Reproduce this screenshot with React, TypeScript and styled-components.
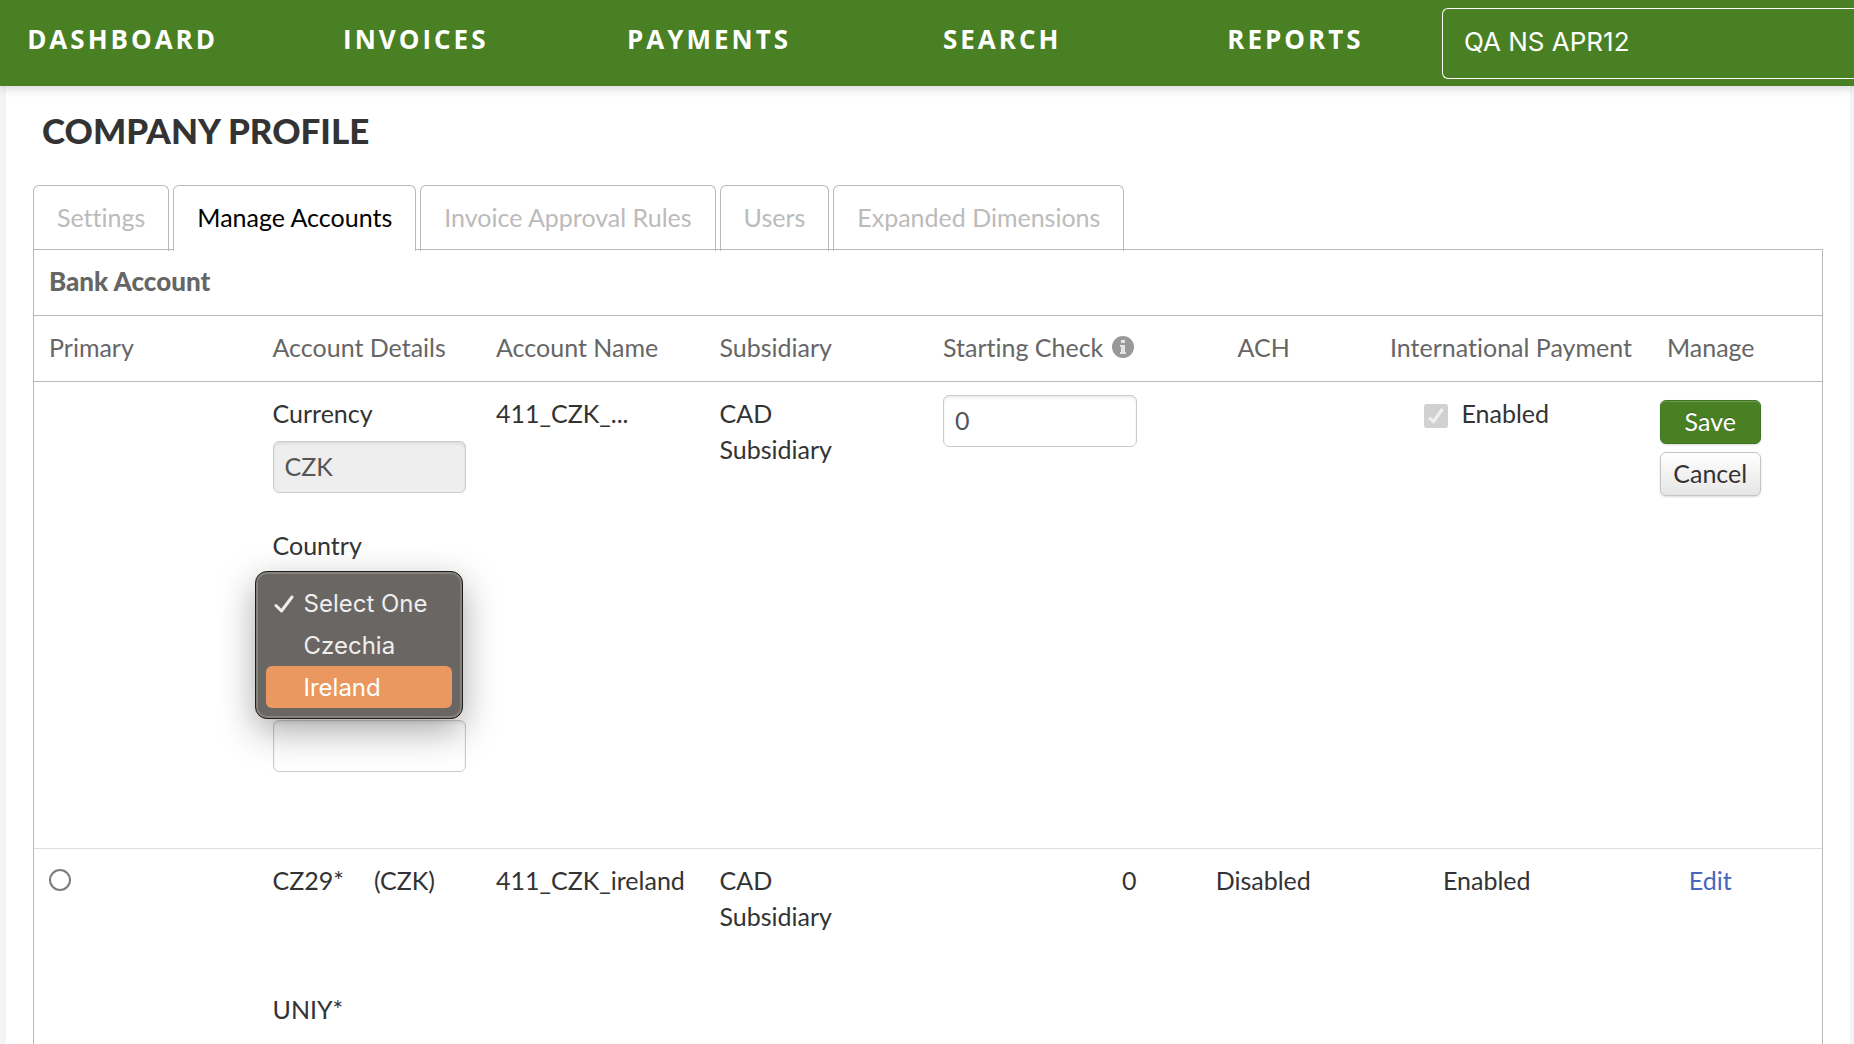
import React from "react";
import styled, { createGlobalStyle } from "styled-components";

const bodyFont = `Lato, "Open Sans", "Liberation Sans", sans-serif`;
const navFont = `"Open Sans", "Noto Sans", sans-serif`;

const GlobalStyle = createGlobalStyle`
  *, *::before, *::after { box-sizing: border-box; }
  html { background: #f3f4f6; }
  body {
    margin: 0;
    overflow: hidden;
    font-family: ${bodyFont};
    font-size: 25px;
    line-height: 36px;
    font-variant-ligatures: none;
    color: #333;
  }
  #root { height: 100vh; }
  input, button, select { font: inherit; color: inherit; }
`;

const Page = styled.div`
  display: flex;
  flex-direction: column;
  min-height: 100%;
`;

const Header = styled.header`
  position: relative;
  display: grid;
  grid-template-columns: 7fr 2fr;
  height: 86px;
  background: #498023;
  box-shadow: 0 2px 10px rgba(0, 0, 0, 0.18);
  color: #fff;
  font-family: ${navFont};
`;

const Nav = styled.nav`
  display: grid;
  grid-template-columns: repeat(5, 1fr);
  margin-left: -24px;
  padding-bottom: 8px;
`;

const NavLink = styled.a`
  display: flex;
  align-items: center;
  justify-content: center;
  color: #fff;
  font-size: 26px;
  font-weight: 700;
  letter-spacing: 3px;
  text-decoration: none;
`;

const CompanyButton = styled.button`
  margin: 8px 0 7px;
  padding: 0 21px 4px;
  border: 1px solid #fff;
  border-right: 0;
  border-radius: 6px 0 0 6px;
  background: transparent;
  color: #fff;
  font-family: Inter, sans-serif;
  font-size: 26px;
  text-align: left;
`;

const Panel = styled.main`
  flex: 1;
  margin: 0 4px 0 6px;
  padding: 24px 27px 0;
  background: #fff;
`;

const Title = styled.h1`
  margin: 0 9px 35px;
  font-size: 35px;
  line-height: 40px;
  font-weight: 900;
`;

const Tabs = styled.div`
  display: flex;
  gap: 4px;
`;

const Tab = styled.button<{ $active?: boolean }>`
  position: relative;
  height: 66px;
  margin-bottom: -2px;
  padding: 0 23px 4px;
  border: 1px solid #b9b9b9;
  border-bottom: 0;
  border-radius: 6px 6px 0 0;
  background: ${(p) => (p.$active ? "#fff" : "transparent")};
  color: ${(p) => (p.$active ? "#000" : "#bbb")};
`;

const Table = styled.table`
  width: 100%;
  table-layout: fixed;
  border: 1px solid #b9b9b9;
  border-spacing: 0;
`;

const HeadCell = styled.th<{ $align?: string; $strong?: boolean }>`
  padding: 13px 14px 16px 15px;
  border-bottom: 1px solid #b9b9b9;
  color: #666;
  font-size: ${(p) => (p.$strong ? "26px" : "25px")};
  font-weight: ${(p) => (p.$strong ? 900 : 400)};
  text-align: ${(p) => p.$align ?? "left"};
  white-space: nowrap;
`;

const HeadLabel = styled.span`
  display: flex;
  align-items: center;
  gap: 9px;
`;

const Cell = styled.td<{ $align?: string }>`
  padding: 13px 15px 15px;
  border-bottom: 1px solid #ddd;
  text-align: ${(p) => p.$align ?? "left"};
  vertical-align: top;
`;

const FieldStack = styled.div`
  display: flex;
  flex-direction: column;
  gap: 10px;
  margin-bottom: 34px;
  position: relative;
`;

const TextInput = styled.input`
  display: block;
  width: 100%;
  height: 52px;
  padding: 0 11px 3px;
  border: 1px solid #ccc;
  border-radius: 6px;
  background: #fff;
  box-shadow: inset 0 2px 3px rgba(0, 0, 0, 0.08);
  color: #555;

  &:disabled { background: #eee; }
`;

const CountrySelect = styled.select`
  width: 95%;
  height: 52px;
  border: 1px solid #ccc;
  border-radius: 6px;
  background: #fff;
`;

const Menu = styled.ul`
  position: absolute;
  top: 44px;
  left: -18px;
  width: 208px;
  margin: 0;
  padding: 10px;
  border: 1px solid #1f1e1d;
  border-radius: 12px;
  background: #6a6663;
  box-shadow: inset 0 0 0 2px #85817d, 0 12px 36px rgba(0, 0, 0, 0.34);
  color: #eee;
  font-family: Inter, sans-serif;
  font-size: 24px;
  list-style: none;
`;

const Option = styled.li<{ $highlighted?: boolean }>`
  display: grid;
  grid-template-columns: 20px 1fr;
  align-items: center;
  gap: 10px;
  height: 42px;
  padding: 2px 0 0 8px;
  border-radius: 6px;
  background: ${(p) => (p.$highlighted ? "#ea985f" : "transparent")};
  color: ${(p) => (p.$highlighted ? "#fff" : "inherit")};
  white-space: nowrap;
`;

const Spacer = styled.div`
  height: 61px;
`;

const CheckLabel = styled.label`
  display: flex;
  justify-content: center;
  gap: 13px;
`;

const Checkbox = styled.input`
  appearance: none;
  width: 24px;
  height: 24px;
  margin: 9px 0 0;
  border-radius: 3px;
  background: #d1d1d1;
`;

const CheckBoxWrap = styled.span`
  position: relative;
  display: flex;

  svg {
    position: absolute;
    top: 9px;
    left: 0;
  }
`;

const Radio = styled.input`
  appearance: none;
  display: block;
  width: 22px;
  height: 22px;
  margin: 7px 0 0;
  border: 2px solid #7c7c7c;
  border-radius: 50%;
  background: #fff;
`;

const Actions = styled.div`
  display: flex;
  flex-direction: column;
  align-items: center;
  gap: 8px;
  padding-top: 5px;
`;

const Button = styled.button<{ $primary?: boolean }>`
  width: 101px;
  height: 44px;
  padding: 0 0 3px;
  border: 1px solid ${(p) => (p.$primary ? "#42751f" : "#c4c4c4")};
  border-radius: 6px;
  background: ${(p) => (p.$primary ? "#498023" : "linear-gradient(#fff, #e6e6e6)")};
  box-shadow: inset 0 1px 0 rgba(255, 255, 255, 0.2), 0 1px 2px rgba(0, 0, 0, 0.15);
  color: ${(p) => (p.$primary ? "#fff" : "#333")};
  text-shadow: ${(p) => (p.$primary ? "0 -1px 0 rgba(0, 0, 0, 0.25)" : "0 1px 1px rgba(255, 255, 255, 0.75)")};
`;

const AccountLine = styled.div`
  display: flex;
  gap: 30px;
  margin-bottom: 93px;
`;

const EditLink = styled.a`
  color: #4766bd;
  text-decoration: none;
`;

const InfoIcon = () => (
  <svg width="22" height="22" viewBox="0 0 22 22" role="img" aria-label="Info">
    <circle cx="11" cy="11" r="11" fill="#999" />
    <path d="M9 4h4v3H9zM8 9h5v7h1v2H8v-2h1v-5H8z" fill="#e4e4e4" />
  </svg>
);

const CheckMark = () => (
  <svg width="20" height="20" viewBox="0 0 20 20" aria-hidden="true">
    <path d="M2 11.5 7.5 17 18 3" fill="none" stroke="currentColor" strokeWidth="3" strokeLinecap="round" strokeLinejoin="round" />
  </svg>
);

const navItems = ["DASHBOARD", "INVOICES", "PAYMENTS", "SEARCH", "REPORTS"];
const tabs = ["Settings", "Manage Accounts", "Invoice Approval Rules", "Users", "Expanded Dimensions"];
const countries = ["Select One", "Czechia", "Ireland"];

export default function App() {
  return (
    <Page>
      <GlobalStyle />
      <Header>
        <Nav>
          {navItems.map((item) => (
            <NavLink key={item} href="#">{item}</NavLink>
          ))}
        </Nav>
        <CompanyButton type="button">QA NS APR12</CompanyButton>
      </Header>
      <Panel>
        <Title>COMPANY PROFILE</Title>
        <Tabs role="tablist">
          {tabs.map((tab) => (
            <Tab key={tab} type="button" role="tab" aria-selected={tab === "Manage Accounts"} $active={tab === "Manage Accounts"}>
              {tab}
            </Tab>
          ))}
        </Tabs>
        <Table>
          <thead>
            <tr>
              <HeadCell colSpan={8} $strong>Bank Account</HeadCell>
            </tr>
            <tr>
              <HeadCell>Primary</HeadCell>
              <HeadCell>Account Details</HeadCell>
              <HeadCell>Account Name</HeadCell>
              <HeadCell>Subsidiary</HeadCell>
              <HeadCell><HeadLabel>Starting Check <InfoIcon /></HeadLabel></HeadCell>
              <HeadCell $align="center">ACH</HeadCell>
              <HeadCell $align="center">International Payment</HeadCell>
              <HeadCell $align="center">Manage</HeadCell>
            </tr>
          </thead>
          <tbody>
            <tr>
              <Cell />
              <Cell>
                <FieldStack>
                  <label htmlFor="currency">Currency</label>
                  <TextInput id="currency" defaultValue="CZK" disabled />
                </FieldStack>
                <FieldStack>
                  <label htmlFor="country">Country</label>
                  <CountrySelect id="country" defaultValue="Select One">
                    {countries.map((country) => <option key={country}>{country}</option>)}
                  </CountrySelect>
                  <Menu role="listbox" aria-label="Country">
                    {countries.map((country) => (
                      <Option key={country} role="option" aria-selected={country === "Select One"} $highlighted={country === "Ireland"}>
                        {country === "Select One" ? <CheckMark /> : <span />}
                        {country}
                      </Option>
                    ))}
                  </Menu>
                </FieldStack>
                <Spacer />
                <TextInput aria-label="Account number" />
                <Spacer />
              </Cell>
              <Cell>411_CZK_...</Cell>
              <Cell>CAD<br />Subsidiary</Cell>
              <Cell><TextInput aria-label="Starting check" defaultValue="0" /></Cell>
              <Cell />
              <Cell>
                <CheckLabel>
                  <CheckBoxWrap>
                    <Checkbox type="checkbox" defaultChecked disabled />
                    <svg width="24" height="24" viewBox="0 0 24 24" aria-hidden="true">
                      <path d="M5 13.5 9.5 17.5 18.5 5" fill="none" stroke="#f0f0f0" strokeWidth="3" />
                    </svg>
                  </CheckBoxWrap>
                  Enabled
                </CheckLabel>
              </Cell>
              <Cell>
                <Actions>
                  <Button type="button" $primary>Save</Button>
                  <Button type="button">Cancel</Button>
                </Actions>
              </Cell>
            </tr>
            <tr>
              <Cell><Radio type="radio" name="primary" aria-label="Primary account" /></Cell>
              <Cell>
                <AccountLine><span>CZ29*</span><span>(CZK)</span></AccountLine>
                UNIY*
                <Spacer />
              </Cell>
              <Cell>411_CZK_ireland</Cell>
              <Cell>CAD<br />Subsidiary</Cell>
              <Cell $align="right">0</Cell>
              <Cell $align="center">Disabled</Cell>
              <Cell $align="center">Enabled</Cell>
              <Cell $align="center"><EditLink href="#">Edit</EditLink></Cell>
            </tr>
          </tbody>
        </Table>
      </Panel>
    </Page>
  );
}
